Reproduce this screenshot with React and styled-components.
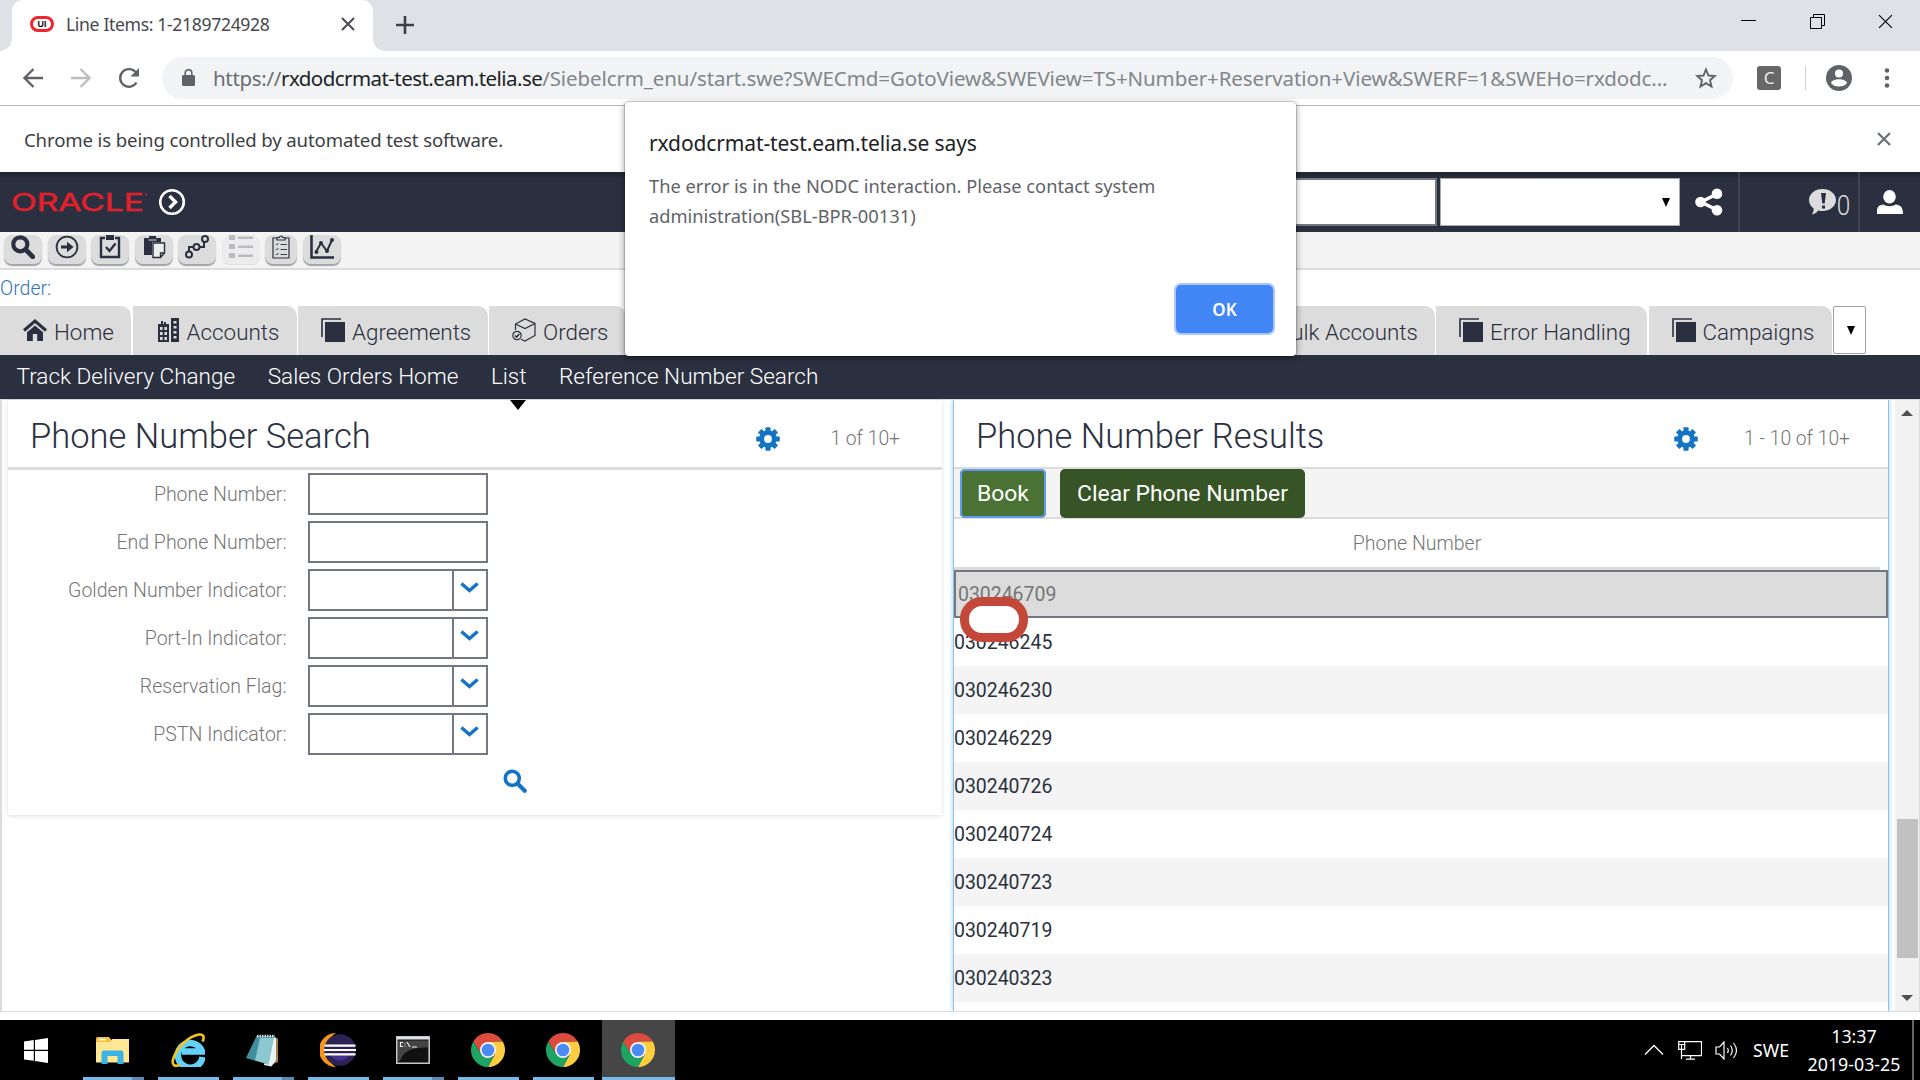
import React from 'react';
import styled, { createGlobalStyle, css } from 'styled-components';

const navy = '#2b3040';
const line = '#dcdcdc';
const slate = '#737782';
const blue = '#1474c4';
const ui = '"Noto Sans", "Open Sans", sans-serif';

const GlobalStyle = createGlobalStyle`
  * { box-sizing: border-box; }
  body { margin: 0; background: #fff; font-family: Roboto, sans-serif; overflow: hidden; }
  svg { display: block; flex: none; }
`;

const Screen = styled.div`
  position: relative;
  width: 1920px;
  height: 1080px;
  overflow: hidden;
  display: flex;
  flex-direction: column;
  background: #fff;
`;

/* ---------- browser chrome ---------- */

const UiText = styled.span`
  font-family: ${ui};
  font-size: ${p => p.$size}px;
  letter-spacing: ${p => p.$track || 0}px;
  color: ${p => p.$color};
  white-space: nowrap;
`;

const TabStrip = styled.div`
  height: 51px;
  flex: none;
  background: #dee1e6;
  display: flex;
  align-items: stretch;
  padding: 0 0 0 12px;
`;

const BrowserTab = styled.div`
  position: relative;
  width: 361px;
  background: #fff;
  border-radius: 11px 11px 0 0;
  display: flex;
  align-items: center;
  padding: 0 18px 3px;

  &::before, &::after {
    content: '';
    position: absolute;
    bottom: 0;
    width: 12px;
    height: 12px;
  }
  &::before { left: -12px; background: radial-gradient(circle at 0 0, transparent 11.5px, #fff 12px); }
  &::after { right: -12px; background: radial-gradient(circle at 100% 0, transparent 11.5px, #fff 12px); }
`;

const Favicon = styled.span`
  width: 24px;
  height: 16px;
  border: 3px solid #ee2430;
  border-radius: 8px;
  display: flex;
  align-items: center;
  justify-content: center;
  font: 700 9px/1 "Liberation Sans", sans-serif;
  color: #111;
  margin-right: 12px;
`;

const NewTab = styled.div`
  display: flex;
  align-items: center;
  margin-left: 23px;
  padding-bottom: 1px;
`;

const WindowButtons = styled.div`
  margin-left: auto;
  display: flex;
  gap: 53.5px;
  padding: 14px 27px 0 0;
`;

const AddressRow = styled.div`
  height: 54px;
  flex: none;
  display: flex;
  align-items: center;
  padding: 0 27px 1px 22px;
`;

const NavIcons = styled.div`
  display: flex;
  gap: 26px;
  width: 140px;
`;

const Omnibox = styled.div`
  width: 1571px;
  height: 42px;
  border-radius: 21px;
  background: #f1f3f4;
  display: flex;
  align-items: center;
  padding: 0 16px 0 20px;
`;

const Url = styled.div`
  display: flex;
  margin-left: 18px;
  flex: 1;
`;

const ExtensionBadge = styled.div`
  width: 24px;
  height: 24px;
  margin-left: 24px;
  border-radius: 3px;
  background: #676767;
  color: #eee;
  font: 400 17px/24px ${ui};
  text-align: center;
`;

const Separator = styled.div`
  width: 1px;
  height: 24px;
  background: #cfd1d4;
  margin: 0 20px 0 24px;
`;

const InfoBar = styled.div`
  height: 67px;
  flex: none;
  border-top: 1px solid #b4b5b7;
  display: flex;
  align-items: center;
  justify-content: space-between;
  padding: 0 29px 0 24px;
`;

/* ---------- application header ---------- */

const AppHeader = styled.header`
  height: 60px;
  flex: none;
  background: linear-gradient(#20242f, ${navy} 7px);
  display: flex;
  align-items: center;
  padding-left: 11px;
`;

const Brand = styled.div`
  display: flex;
  align-items: center;
  gap: 10px;
`;

const HeaderFields = styled.div`
  margin-left: auto;
  display: flex;
  gap: 3px;
`;

const HeaderInput = styled.div`
  width: 300px;
  height: 48px;
  background: #fff;
  border: 2px solid ${slate};
`;

const HeaderSelect = styled.div`
  width: 240px;
  height: 48px;
  background: #fff;
  border: 1px solid #a9a9a9;
  display: flex;
  align-items: center;
  justify-content: flex-end;
  padding-right: 9px;
`;

const DownArrow = styled.span`
  border: solid transparent;
  border-width: ${p => p.$h}px ${p => p.$w / 2}px 0;
  border-top-color: ${p => p.$color || '#000'};
`;

const UpArrow = styled.span`
  border: solid transparent;
  border-width: 0 6px 6px;
  border-bottom-color: #505050;
`;

const HeaderCell = styled.div`
  height: 100%;
  width: ${p => p.$w}px;
  display: flex;
  align-items: center;
  justify-content: ${p => (p.$end ? 'flex-end' : 'center')};
  padding-right: ${p => (p.$end ? 7 : 0)}px;
  ${p => p.$line && css`border-left: 2px solid #3f4453;`}
`;

const AlertCount = styled.span`
  color: #dcdcdc;
  font-size: 27px;
  font-weight: 300;
  line-height: 30px;
  margin: 7px 0 0;
  transform: scaleX(.9);
`;

const ToolRow = styled.div`
  height: 38px;
  flex: none;
  background: #f4f4f4;
  border-bottom: 2px solid ${line};
  display: flex;
  align-items: flex-start;
  gap: 5.5px;
  padding: 3px 0 0 4px;
`;

const ToolButton = styled.div`
  width: ${p => p.$w || 38}px;
  height: 29px;
  border-radius: 8px;
  background: ${p => (p.$off ? '#ececec' : '#dcdcdc')};
  box-shadow: 0 ${p => (p.$off ? '1px 1px #ddd' : '2px 1px #a2a4a9')};
  display: flex;
  justify-content: center;
  align-items: flex-start;
`;

const OrderLine = styled.div`
  height: 36px;
  flex: none;
  font-weight: 300;
  font-size: 19.5px;
  line-height: 38px;
  color: #2f74bd;
`;

const ScreenTabs = styled.nav`
  height: 49px;
  flex: none;
  display: flex;
  gap: 1.5px;
  padding-right: 54px;
`;

const ScreenTab = styled.div`
  width: ${p => p.$w}px;
  flex: none;
  background: #dcdcdc;
  border-radius: 0 10px 0 0;
  display: flex;
  align-items: center;
  gap: 7px;
  padding: 2px 0 0 23px;
  font-weight: 300;
  font-size: 22.4px;
  color: ${navy};
  white-space: nowrap;
`;

const TabIcon = styled.span`
  width: 24px;
  padding-bottom: 3px;
  display: flex;
  justify-content: center;
`;

const Spring = styled.span`
  flex: 1;
`;

const MoreTabs = styled.div`
  width: 33px;
  height: 48px;
  border: 1px solid #a0a0a0;
  border-radius: 2px;
  background: #fff;
  display: flex;
  align-items: center;
  justify-content: center;
  padding-left: 2px;
`;

const ViewBar = styled.nav`
  height: 44px;
  flex: none;
  background: ${navy};
  display: flex;
  gap: 32.5px;
  padding-left: 16.5px;
`;

const ViewLink = styled.div`
  position: relative;
  font-weight: 300;
  font-size: 22.55px;
  line-height: 43px;
  color: #fff;
  white-space: nowrap;
`;

const ActiveMark = styled(DownArrow)`
  position: absolute;
  top: 45px;
  left: 19px;
  z-index: 2;
`;

/* ---------- panels ---------- */

const Workspace = styled.main`
  height: 613px;
  flex: none;
  border: solid ${line};
  border-width: 1px 1px 1px 2px;
  display: flex;
  align-items: flex-start;
`;

const SearchPanel = styled.section`
  width: 934px;
  height: 415px;
  margin: 0 11px 0 6px;
  background: #fff;
  box-shadow: 0 1px 4px rgba(0, 0, 0, .14);
`;

const ResultsPanel = styled.section`
  width: 936px;
  height: 611px;
  border: solid #8cc0e6;
  border-width: 0 1px;
  box-shadow: 0 0 5px rgba(80, 160, 220, .5);
  clip-path: inset(0 -6px);
`;

const PanelHead = styled.div`
  height: ${p => 67 + p.$rule}px;
  border-bottom: ${p => p.$rule}px solid ${line};
  display: flex;
  align-items: center;
  padding: 0 ${p => p.$right}px 0 ${p => p.$left}px;
`;

const PanelTitle = styled.h1`
  margin: 0 auto 0 0;
  padding-top: 5px;
  font-weight: 300;
  font-size: 34.5px;
  line-height: 40px;
  color: ${navy};
`;

const Counter = styled.span`
  width: ${p => p.$w}px;
  padding-top: 10px;
  text-align: right;
  font-weight: 300;
  font-size: 19.3px;
  color: #757575;
`;

const GearSlot = styled.span`
  padding-top: 11px;
`;

const Form = styled.div`
  display: grid;
  grid-template-columns: 278.5px 180px;
  column-gap: 21.5px;
  row-gap: 6px;
  padding-top: 3px;
`;

const Label = styled.label`
  text-align: right;
  font-weight: 300;
  font-size: 19.5px;
  line-height: 44px;
  height: 42px;
  color: #757575;
`;

const Field = styled.div`
  height: 42px;
  border: 2px solid ${slate};
  background: #fff;
  display: flex;
  justify-content: flex-end;
`;

const PickButton = styled.span`
  width: 34px;
  border-left: 2px solid ${slate};
  display: flex;
  align-items: center;
  justify-content: center;
  padding: 0 2px 5px 0;
`;

const SearchAction = styled.div`
  padding: 14px 0 0 495px;
`;

const Actions = styled.div`
  height: 50px;
  background: #f4f4f4;
  border-bottom: 2px solid ${line};
  display: flex;
  gap: 14px;
  padding-left: 6px;
`;

const ActionButton = styled.button`
  width: ${p => p.$w}px;
  height: 49px;
  padding: 0 0 1px;
  border: 0;
  border-radius: 5px;
  background: ${p => (p.$focus ? '#4a7235' : '#375427')};
  box-shadow: ${p => (p.$focus ? 'inset 0 0 0 2px #5f9cf0' : 'none')};
  color: #fff;
  font: 400 22.9px Roboto, sans-serif;
`;

const ColumnHead = styled.div`
  height: 51px;
  margin-right: 8px;
  border-bottom: 3px solid ${line};
  text-align: center;
  font-weight: 300;
  font-size: 19.5px;
  line-height: 49px;
  color: #757575;
`;

const ResultRow = styled.div`
  height: 48px;
  padding-top: 1px;
  font-size: 19.45px;
  line-height: 48px;
  color: ${navy};
  background: ${p => (p.$shade ? '#f4f4f4' : '#fff')};
  ${p => p.$selected && css`
    border: 2px solid ${slate};
    background: #dcdcdc;
    color: #757575;
    padding: 0 0 0 2px;
    line-height: 45px;
  `}
`;

const Scrollbar = styled.div`
  width: 24px;
  height: 611px;
  margin-left: auto;
  background: #f1f1f1;
  display: flex;
  flex-direction: column;
  align-items: center;
  padding: 10px 0;
`;

const Thumb = styled.div`
  width: 21px;
  height: 139px;
  margin: 403px 0 auto;
  background: #c1c1c1;
`;

/* ---------- overlays ---------- */

const TouchRing = styled.div`
  position: absolute;
  left: 960px;
  top: 597px;
  width: 68px;
  height: 45px;
  border: 9px solid #c4483a;
  border-radius: 22px;
  background: #fff;
`;

const Dialog = styled.div`
  position: absolute;
  left: 625px;
  top: 102px;
  width: 671px;
  height: 254px;
  background: #fff;
  border-radius: 4px;
  box-shadow: 0 0 0 1px rgba(0, 0, 0, .14), 0 2px 7px rgba(0, 0, 0, .45);
  padding: 26px 23px 23px 24px;
  display: flex;
  flex-direction: column;
`;

const DialogTitle = styled.div`
  font: 400 21px/30px ${ui};
  letter-spacing: -.12px;
  color: #202124;
`;

const DialogText = styled.div`
  width: 530px;
  margin-top: 13px;
  font: 400 18.3px/30px ${ui};
  color: #5f6368;
`;

const OkButton = styled.button`
  width: 97px;
  height: 48px;
  margin: auto 0 0 auto;
  border: 0;
  border-radius: 5px;
  background: #4285f4;
  box-shadow: 0 0 0 2px #a9c7fa;
  color: #fff;
  font: 600 17px ${ui};
`;

/* ---------- taskbar ---------- */

const Taskbar = styled.footer`
  height: 60px;
  flex: none;
  margin-top: auto;
  background: #000;
  display: flex;
  align-items: stretch;
`;

const StartButton = styled.div`
  width: 76px;
  padding-left: 24px;
  display: flex;
  align-items: center;
`;

const TaskItem = styled.div`
  width: ${p => (p.$active ? 73 : 61)}px;
  margin: 0 ${p => (p.$active ? 1 : 7)}px;
  background: ${p => (p.$active ? '#464646' : 'none')};
  border-bottom: 3px solid #76b9ed;
  ${p => p.$stack && css`border-image: linear-gradient(90deg, #76b9ed 47px, #5b8cb3 47px) 3;`}
  display: flex;
  align-items: center;
  justify-content: center;
  padding: 3px 2px 0 0;
`;

const Tray = styled.div`
  margin-left: auto;
  display: flex;
  align-items: center;
  padding-right: 6px;
`;

const TrayIcons = styled.div`
  display: flex;
  gap: 13.5px;
  align-items: center;
  margin-right: 14px;
`;

const Clock = styled.div`
  width: 125px;
  height: 60px;
  padding: 2px 0 0 7px;
  border-right: 2px solid #666;
  display: flex;
  flex-direction: column;
  align-items: center;
  font: 400 17.8px/28px ${ui};
  color: #fff;
`;

/* ---------- drawings ---------- */

const Cross = ({ size, color, w }) => (
  <svg width={size} height={size} viewBox="0 0 14 14" stroke={color} strokeWidth={w} fill="none">
    <path d="M1 1l12 12M13 1L1 13" />
  </svg>
);

const Back = ({ color, flip }) => (
  <svg width="22" height="22" viewBox="0 0 22 22" fill="none" stroke={color} strokeWidth="2.4">
    <path d={flip ? 'M1 11h18M10.5 2l9 9-9 9' : 'M21 11H3M11.5 2l-9 9 9 9'} />
  </svg>
);

const Gear = () => (
  <svg width="24" height="24" viewBox="-12 -12 24 24">
    <g fill={blue}>
      {[0, 45, 90, 135].map(a => <rect key={a} x="-2.6" y="-11.8" width="5.2" height="23.6" rx=".8" transform={`rotate(${a})`} />)}
      <circle r="8.7" />
    </g>
    <circle r="3.9" fill="#fff" />
  </svg>
);

const Magnifier = ({ color, size, w = 4 }) => (
  <svg width={size} height={size} viewBox="0 0 24 24" fill="none" stroke={color} strokeWidth={w} strokeLinecap="round">
    <circle cx="9.3" cy="9.3" r="7" />
    <path d="M15 15l6.7 6.7" strokeWidth={w + .6} />
  </svg>
);

const Pages = () => (
  <svg width="24" height="24" viewBox="0 0 24 24">
    <path d="M1 19V1h19" fill="none" stroke={navy} strokeWidth="1.6" />
    <path fill={navy} d="M4 4h20v20H4z" />
  </svg>
);

const House = () => (
  <svg width="24" height="22" viewBox="0 0 24 22">
    <path d="M1 11.5L12 2l11 9.5" fill="none" stroke={navy} strokeWidth="3" />
    <path fill={navy} d="M4 13.2L12 6.4l8 6.8V22h-5.8v-7H9.8v7H4z" />
  </svg>
);

const Building = () => (
  <svg width="22" height="24" viewBox="0 0 22 24">
    <path fill={navy} d="M1 6h3V3h2v3h1V4h2v2h3v18H1zM14 0h8v24h-8z" />
    <path fill="#dcdcdc" d="M3 9h2.6v3H3zM7.4 9H10v3H7.4zM3 14h2.6v3H3zM7.4 14H10v3H7.4zM3 19h2.6v3H3zM7.4 19H10v3H7.4zM16.5 3h3v2.4h-3zM16.5 8h3v2.4h-3zM16.5 13h3v2.4h-3zM16.5 18h3v2.4h-3z" />
  </svg>
);

const Box = () => (
  <svg width="24" height="24" viewBox="0 0 24 24" fill="none" stroke={navy} strokeWidth="1.2">
    <path d="M3.5 12V6L13 1l10 4.500v12L13 23l-4-1.800M3.500 6L13 10.500l10-5" />
    <circle cx="5" cy="17.500" r="4.200" />
    <path d="M3 17.500l1.500 1.600L7.300 16" strokeWidth="1.600" />
  </svg>
);

const Chevron = () => (
  <svg width="19" height="11" viewBox="0 0 19 11" fill="none" stroke={blue} strokeWidth="3.4">
    <path d="M1.4 1.500l8.100 7 8.100-7" />
  </svg>
);

const ToolIcon = ({ name }) => {
  const stroke = { fill: 'none', stroke: navy, strokeWidth: 2 };
  if (name === 'search') return <Magnifier color={navy} size={24} w={4.2} />;
  return (
    <svg width="24" height="24" viewBox="0 0 24 24">
      {name === 'go' && <g {...stroke} strokeWidth="1.8"><circle cx="12" cy="12" r="10.4" /><path d="M6 12h9" strokeWidth="3" /><path d="M12 6.800l6.500 5.200-6.500 5.200z" fill={navy} stroke="none" /></g>}
      {name === 'check' && <g {...stroke} strokeWidth="2.4"><path d="M7 3H3v19h18V3h-4M8 12l3.500 4L17.500 8.500" /><path d="M8 0h8v5H8z" fill={navy} stroke="none" /></g>}
      {name === 'paste' && <g><path fill={navy} d="M2 3h5V1h7v2h5v4h-9v13H2z" /><path d="M11 8h11.500v10l-4 4.500H11z M18.500 22.500V18h4" fill="#eee" stroke={navy} strokeWidth="1.4" /><path d="M6.500 5h8" stroke="#dcdcdc" /></g>}
      {name === 'path' && <g {...stroke}><circle cx="4" cy="19.500" r="3" /><circle cx="11.500" cy="12" r="3" /><circle cx="20" cy="4" r="3" /><path d="M4 16.500V12h4.500M14.500 12H19V7" /></g>}
      {name === 'list' && <g fill="#b9bbc1"><path d="M0 0h6v5H0zM0 9h6v5H0zM0 18h6v5H0zM9 1.500h15v2.500H9zM9 10.500h15v2.500H9zM9 19.500h15v2.500H9z" /></g>}
      {name === 'clip' && <g {...stroke} strokeWidth="1.2"><path d="M8 3H4v20h16V3h-4M8 5V2.500h2.500a1.500 1.500 0 0 1 3 0H16V5z" /><path d="M6.800 9l1 1 1.500-2M6.800 14l1 1 1.500-2M6.800 19l1 1 1.500-2M11.500 9.500H18M11.500 14.500H18M11.500 19.500H18" strokeWidth=".9" /></g>}
      {name === 'chart' && <g {...stroke}><path d="M1.500 0v22.500H24" strokeWidth="2.6" /><path d="M6 17L11 8l6 8 5-11" /><g fill={navy} stroke="none"><circle cx="6.500" cy="17" r="2" /><circle cx="11" cy="8" r="2" /><circle cx="17" cy="16" r="2" /><circle cx="22" cy="5" r="2" /></g></g>}
    </svg>
  );
};

const ChromeLogo = () => (
  <svg width="34" height="34" viewBox="-17 -17 34 34">
    <path fill="#dd4b3e" d="M-14.720-8.500A17 17 0 0 1 14.720-8.500L0-8.200-7 4z" />
    <path fill="#ffcd40" d="M14.720-8.500A17 17 0 0 1 0 17L7 4 0-8.200z" />
    <path fill="#1da462" d="M0 17A17 17 0 0 1-14.720-8.500L-7 4 2 8 6 6z" />
    <circle r="8" fill="#f4f4f4" />
    <circle r="6.300" fill="#4a8af4" />
  </svg>
);

const Folder = () => (
  <svg width="33" height="27" viewBox="0 0 33 27">
    <path fill="#f5c236" d="M0 1.500Q0 0 1.500 0H13l2 2.500V6H0z" />
    <path fill="#ffe793" d="M0 5h14l2-3h17v23.500H0z" />
    <path fill="#fff" d="M3 1.800h7v1.600H3z" />
    <path fill="#3bb3e6" d="M5.500 27V16q0-2.500 2.500-2.500h17q2.500 0 2.500 2.500v11h-6v-8h-10v8z" />
  </svg>
);

const Explorer = () => (
  <svg width="34" height="34" viewBox="0 0 34 34">
    <path fill="none" stroke="#62d2fa" strokeWidth="6.500" d="M31.500 24A12.300 12.300 0 1 1 31 18.500H11" />
    <path fill="none" stroke="#f5c518" strokeWidth="2.600" d="M9 31.500C4 34.500 0 32 2.500 25 6 14 18 3 28 1.500c5-.6 5.500 3 3.500 7" />
  </svg>
);

const Notepad = () => (
  <svg width="34" height="33" viewBox="0 0 34 33">
    <path fill="#a38348" d="M28 3l4 1.500V28l-5 2z" />
    <path fill="#e9f2f4" d="M24 2l6 2v22l-4.500 6.500L18 31z" />
    <path fill="#3f8f9e" d="M10.500 2h17.500L22.500 30.500 0 24z" />
    <path fill="#a8dbe2" d="M14 4h13.500L22.500 30.500 9 26.500z" opacity=".75" />
    <path stroke="#ddd" strokeWidth="2.500" strokeDasharray="1.500 1" d="M11 2h18" />
  </svg>
);

const Eclipse = () => (
  <svg width="36" height="34" viewBox="0 0 36 34">
    <path fill="#f7941e" d="M16 0A17 17 0 0 0 16 34 20 20 0 0 1 16 0" />
    <circle cx="20" cy="17" r="15.800" fill="#2c2255" />
    <path fill="#443191" d="M10 21h20a11 11 0 0 1-20 0" />
    <path stroke="#fff" strokeWidth="2.200" d="M4.500 12.700h31M4 17h32M4.500 21.300h31" />
  </svg>
);

const Console = () => (
  <svg width="34" height="28" viewBox="0 0 34 28">
    <path fill="#111" stroke="#c3c7cb" strokeWidth="1.600" d="M.8.800h32.400v26.400H.8z" />
    <path fill="#dfe3e6" d="M1 1h32v2.500H1z" />
    <path fill="#444" d="M2 4.500h30v7C20 11.500 8 13 4 25H2z" />
    <path d="M7 6.500H4.500v4H7M9 7.500v.8M9 9.700v.8M11 6l3 5M16 11h5" fill="none" stroke="#eee" strokeWidth="1.200" />
  </svg>
);

/* ---------- data ---------- */

const tools = [
  { name: 'search' }, { name: 'go' }, { name: 'check' }, { name: 'paste' },
  { name: 'path' }, { name: 'list', off: true }, { name: 'clip', w: 32 }, { name: 'chart' },
];

const leftTabs = [
  { label: 'Home', w: 131, icon: <House /> },
  { label: 'Accounts', w: 164, icon: <Building /> },
  { label: 'Agreements', w: 189.5, icon: <Pages /> },
  { label: 'Orders', w: 137, icon: <Box /> },
];

const rightTabs = [
  { label: 'Bulk Accounts', w: 211, icon: <Pages /> },
  { label: 'Error Handling', w: 211, icon: <Pages /> },
  { label: 'Campaigns', w: 183, icon: <Pages /> },
];

const views = ['Track Delivery Change', 'Sales Orders Home', 'List', 'Reference Number Search'];

const fields = [
  { label: 'Phone Number:' },
  { label: 'End Phone Number:' },
  { label: 'Golden Number Indicator:', pick: true },
  { label: 'Port-In Indicator:', pick: true },
  { label: 'Reservation Flag:', pick: true },
  { label: 'PSTN Indicator:', pick: true },
];

const numbers = [
  '030246709', '030246245', '030246230', '030246229', '030240726',
  '030240724', '030240723', '030240719', '030240323',
];

const tasks = [
  { icon: <Folder />, stack: true }, { icon: <Explorer /> }, { icon: <Notepad />, stack: true },
  { icon: <Eclipse /> }, { icon: <Console />, stack: true }, { icon: <ChromeLogo /> },
  { icon: <ChromeLogo /> }, { icon: <ChromeLogo />, active: true },
];

/* ---------- sections ---------- */

const Browser = () => (
  <>
    <TabStrip>
      <BrowserTab>
        <Favicon>UI</Favicon>
        <UiText $size={17.6} $track={-0.35} $color="#45494d">Line Items: 1-2189724928</UiText>
        <Spring />
        <Cross size={14} color="#4b4f54" w={2.1} />
      </BrowserTab>
      <NewTab>
        <svg width="18" height="18" viewBox="0 0 18 18" stroke="#3c4043" strokeWidth="2.6"><path d="M9 0v18M0 9h18" /></svg>
      </NewTab>
      <WindowButtons>
        <svg width="15" height="15" viewBox="0 0 15 15" stroke="#000"><path d="M0 6.500h15" /></svg>
        <svg width="15" height="15" viewBox="0 0 15 15" stroke="#000" fill="none"><path d="M.5 3.500h11v11H.5zM3.500 3.500v-3h11v11h-3" /></svg>
        <Cross size={15} color="#000" w={1.1} />
      </WindowButtons>
    </TabStrip>
    <AddressRow>
      <NavIcons>
        <Back color="#5f6368" />
        <Back color="#bdbdbf" flip />
        <svg width="22" height="22" viewBox="0 0 22 22"><path d="M18.500 15.500A8.800 8.800 0 1 1 17.500 5" fill="none" stroke="#5f6368" strokeWidth="2.4" /><path fill="#5f6368" d="M21 1v8.500h-8.500z" /></svg>
      </NavIcons>
      <Omnibox>
        <svg width="13" height="17" viewBox="0 0 13 17"><path fill="#5f6368" d="M1.500 6h10A1.500 1.500 0 0 1 13 7.500v8a1.500 1.500 0 0 1-1.500 1.500h-10A1.500 1.500 0 0 1 0 15.500v-8A1.500 1.500 0 0 1 1.500 6" /><path d="M3.200 7V4a3.300 3.300 0 0 1 6.600 0v3" fill="none" stroke="#5f6368" strokeWidth="1.6" /></svg>
        <Url>
          <UiText $size={20.5} $track={-0.33} $color="#6a6e73">https://</UiText>
          <UiText $size={20.5} $track={-0.56} $color="#202124">rxdodcrmat-test.eam.telia.se</UiText>
          <UiText $size={20.5} $track={-0.1} $color="#80868b">/Siebelcrm_enu/start.swe?SWECmd=GotoView&amp;SWEView=TS+Number+Reservation+View&amp;SWERF=1&amp;SWEHo=rxdodc...</UiText>
        </Url>
        <svg width="22" height="22" viewBox="0 0 22 22" fill="none" stroke="#5f6368" strokeWidth="1.9"><path d="M11 2.500l2.500 6 6.300.5-4.800 4.200 1.500 6.300-5.500-3.400-5.500 3.400L7 13.200 2.200 9l6.300-.5z" /></svg>
      </Omnibox>
      <ExtensionBadge>C</ExtensionBadge>
      <Separator />
      <svg width="26" height="26" viewBox="0 0 26 26"><circle cx="13" cy="13" r="13" fill="#5f6368" /><circle cx="13" cy="8.500" r="4" fill="#fff" /><path fill="#fff" d="M5 18c1.500-5 14.500-5 16 0-3 4.700-13 4.700-16 0" /></svg>
      <Spring />
      <svg width="12" height="20" viewBox="0 0 12 20" fill="#5f6368"><circle cx="6" cy="2.500" r="2.300" /><circle cx="6" cy="10" r="2.300" /><circle cx="6" cy="17.500" r="2.300" /></svg>
    </AddressRow>
    <InfoBar>
      <UiText $size={18.6} $track={-0.13} $color="#3c4043">Chrome is being controlled by automated test software.</UiText>
      <Cross size={14} color="#6c7075" w={2.2} />
    </InfoBar>
  </>
);

const Header = () => (
  <AppHeader>
    <Brand>
      <svg width="138" height="36" viewBox="0 0 138 36">
        <text x="0" y="27" textLength="133" lengthAdjust="spacingAndGlyphs" fontFamily="Inter, sans-serif" fontWeight="400" fontSize="24.5" fill="#e3202c" stroke="#e3202c" strokeWidth=".5">ORACLE</text>
        <circle cx="135" cy="10.500" r="1" fill="#e3202c" />
      </svg>
      <svg width="28" height="28" viewBox="0 0 28 28" fill="none" stroke="#fff"><circle cx="13" cy="14" r="11.800" strokeWidth="2.6" /><path d="M10.500 8l6 6-6 6" strokeWidth="3.4" /></svg>
    </Brand>
    <HeaderFields>
      <HeaderInput />
      <HeaderSelect><DownArrow $w={9} $h={9} /></HeaderSelect>
    </HeaderFields>
    <HeaderCell $w={58}>
      <svg width="28" height="28" viewBox="0 0 28 28" fill="#fff"><path d="M22 6L6 14l16 8" fill="none" stroke="#fff" strokeWidth="3.6" /><circle cx="22" cy="5.700" r="5.300" /><circle cx="5.500" cy="14" r="5.300" /><circle cx="22" cy="22.300" r="5.300" /></svg>
    </HeaderCell>
    <HeaderCell $w={120} $line $end>
      <svg width="27" height="26" viewBox="0 0 27 26"><path fill="#dcdcdc" d="M13.500 0C21 0 27 4.800 27 11s-6 11-13.500 11c-1.500 0-3-.2-4.300-.6C7.500 23.800 5.500 25 2.500 25.500c1.500-1.500 2.200-3.500 2.100-6C1.800 17.500 0 14.500 0 11 0 4.800 6 0 13.500 0" /><path fill={navy} d="M12 4h5l-1.300 10.500h-2.400zM13 16.500h3v3h-3z" /></svg>
      <AlertCount>0</AlertCount>
    </HeaderCell>
    <HeaderCell $w={62} $line>
      <svg width="27" height="24" viewBox="0 0 27 24" fill="#fff"><ellipse cx="12.500" cy="6.800" rx="6.300" ry="6.800" /><path d="M-.5 24c0-7 2-9 7-9.500 3 2.200 9 2.200 12 0 5 .5 7.500 2.500 7.500 9.500z" /></svg>
    </HeaderCell>
  </AppHeader>
);

const Tab = ({ tab }) => (
  <ScreenTab $w={tab.w}><TabIcon>{tab.icon}</TabIcon>{tab.label}</ScreenTab>
);

const SearchForm = () => (
  <SearchPanel>
    <PanelHead $rule={3} $left={22} $right={42}>
      <PanelTitle>Phone Number Search</PanelTitle>
      <GearSlot><Gear /></GearSlot>
      <Counter $w={120.5}>1 of 10+</Counter>
    </PanelHead>
    <Form>
      {fields.map(f => (
        <React.Fragment key={f.label}>
          <Label>{f.label}</Label>
          <Field>{f.pick && <PickButton><Chevron /></PickButton>}</Field>
        </React.Fragment>
      ))}
    </Form>
    <SearchAction><Magnifier color={blue} size={24} w={3.6} /></SearchAction>
  </SearchPanel>
);

const Results = () => (
  <ResultsPanel>
    <PanelHead $rule={2} $left={22} $right={38}>
      <PanelTitle>Phone Number Results</PanelTitle>
      <GearSlot><Gear /></GearSlot>
      <Counter $w={152}>1 - 10 of 10+</Counter>
    </PanelHead>
    <Actions>
      <ActionButton $w={86} $focus>Book</ActionButton>
      <ActionButton $w={245}>Clear Phone Number</ActionButton>
    </Actions>
    <ColumnHead>Phone Number</ColumnHead>
    {numbers.map((n, i) => (
      <ResultRow key={n} $selected={i === 0} $shade={i % 2 === 0}>{n}</ResultRow>
    ))}
  </ResultsPanel>
);

const Desktop = () => (
  <Taskbar>
    <StartButton>
      <svg width="24" height="25" viewBox="0 0 24 25" fill="#fff"><path d="M0 3.500l9.800-1.400v9.700H0zM11 1.900L24 0v11.800H11zM0 13h9.800v9.800L0 21.400zM11 13h13v12l-13-1.900z" /></svg>
    </StartButton>
    {tasks.map((t, i) => <TaskItem key={i} $active={t.active} $stack={t.stack}>{t.icon}</TaskItem>)}
    <Tray>
      <TrayIcons>
        <svg width="20" height="12" viewBox="0 0 20 12" fill="none" stroke="#fff" strokeWidth="1.4"><path d="M1 10.500L10 1.500l9 9" /></svg>
        <svg width="24" height="19" viewBox="0 0 24 19" fill="none" stroke="#fff" strokeWidth="1.2"><path d="M6.500.7h17v14h-20V8M.7.700h6v7.600h-6zM.7 3.500h6M3.500 3.500V8M12.500 15v3M8 18.200h9M3.500 14v4" /></svg>
        <svg width="24" height="19" viewBox="0 0 24 19" fill="none" stroke="#fff" strokeWidth="1.2"><path d="M1 6h3.500L9 1v17l-4.500-5H1zM12.500 7q1.500 2.500 0 5M15.500 4.500q3.500 5 0 10M18.500 2q6 7.500 0 15" /></svg>
      </TrayIcons>
      <UiText $size={17.7} $color="#fff">SWE</UiText>
      <Clock><span>13:37</span><span>2019-03-25</span></Clock>
    </Tray>
  </Taskbar>
);

export default function App() {
  return (
    <Screen>
      <GlobalStyle />
      <Browser />
      <Header />
      <ToolRow>
        {tools.map(t => <ToolButton key={t.name} $w={t.w} $off={t.off}><ToolIcon name={t.name} /></ToolButton>)}
      </ToolRow>
      <OrderLine>Order:</OrderLine>
      <ScreenTabs>
        {leftTabs.map(t => <Tab key={t.label} tab={t} />)}
        <Spring />
        {rightTabs.map(t => <Tab key={t.label} tab={t} />)}
        <MoreTabs><DownArrow $w={9} $h={9} /></MoreTabs>
      </ScreenTabs>
      <ViewBar>
        {views.map(v => <ViewLink key={v}>{v}{v === 'List' && <ActiveMark $w={17} $h={10} />}</ViewLink>)}
      </ViewBar>
      <Workspace>
        <SearchForm />
        <Results />
        <Scrollbar><UpArrow /><Thumb /><DownArrow $w={12} $h={6} $color="#505050" /></Scrollbar>
      </Workspace>
      <Desktop />
      <TouchRing />
      <Dialog>
        <DialogTitle>rxdodcrmat-test.eam.telia.se says</DialogTitle>
        <DialogText>The error is in the NODC interaction. Please contact system administration(SBL-BPR-00131)</DialogText>
        <OkButton>OK</OkButton>
      </Dialog>
    </Screen>
  );
}
